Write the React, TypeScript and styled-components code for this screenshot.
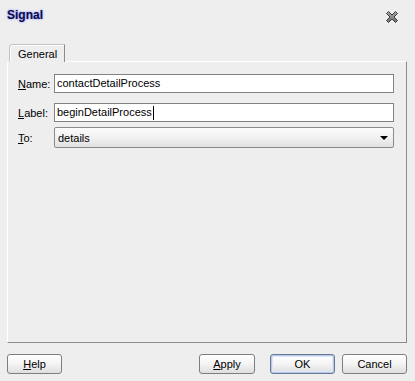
import React from "react";
import styled, { createGlobalStyle } from "styled-components";

const Global = createGlobalStyle`
  html, body { margin: 0; padding: 0; background: #eeeeee; }
  body { font-family: "Liberation Sans", Arial, sans-serif; font-size: 11px; color: #000; }
`;

const Dialog = styled.div`
  width: 415px;
  height: 381px;
  background: #eeeeee;
  display: flex;
  flex-direction: column;
  box-sizing: border-box;
`;

const TitleBar = styled.div`
  height: 44px;
  box-sizing: border-box;
  padding: 8px 16px 0 7px;
  display: flex;
  justify-content: space-between;
  align-items: flex-start;
`;

const Title = styled.div`
  font-weight: bold;
  font-size: 12px;
  color: #0c0c48;
  text-shadow: 0 0 1px #9a9af0, 0 0 2px #a8a8ff, 0 0 3px #c0c0ff;
  line-height: 15px;
`;

const CloseBtn = styled.div`
  width: 14px;
  height: 14px;
  margin-top: 2px;
  display: flex;
`;

const TabStrip = styled.div`
  display: flex;
  padding-left: 9px;
  height: 17px;
  position: relative;
  z-index: 1;
`;

const Tab = styled.div`
  width: 56px;
  height: 18px;
  box-sizing: border-box;
  border-left: 1px solid #c4c4c4;
  border-top: 1px solid #c4c4c4;
  border-right: 1px solid #8c8c8c;
  border-top-left-radius: 4px;
  background: #eeeeee;
  padding: 3px 0 0 8px;
  line-height: 12px;
  box-shadow: inset 1px 1px 0 0 #ffffff;
`;

const Panel = styled.div`
  margin: 0 8px 0 7px;
  height: 282px;
  box-sizing: border-box;
  border-top: 1px solid #ffffff;
  border-left: 1px solid #ffffff;
  border-right: 1px solid #8c8c8c;
  border-bottom: 1px solid #8c8c8c;
  padding: 12px 12px 0 10px;
  display: flex;
  flex-direction: column;
`;

const Row = styled.div<{ $gap: number }>`
  display: grid;
  grid-template-columns: 36px 340px;
  align-items: center;
  margin-bottom: ${(p) => p.$gap}px;
`;

const Label = styled.span`
  white-space: nowrap;
`;

const U = styled.span`
  text-decoration: underline;
`;

const TextField = styled.div`
  height: 19px;
  box-sizing: border-box;
  border: 1px solid #828282;
  background: #ffffff;
  padding: 0 2px;
  line-height: 17px;
  display: flex;
  align-items: center;
`;

const Caret = styled.span`
  display: inline-block;
  width: 1px;
  height: 14px;
  background: #000;
  margin-left: 1px;
`;

const Select = styled.div`
  height: 21px;
  box-sizing: border-box;
  border: 1px solid #8a8a8a;
  border-radius: 2px;
  background: linear-gradient(#fbfbfb 0%, #f2f2f2 45%, #e2e2e2 100%);
  padding: 0 4px 0 3px;
  display: flex;
  align-items: center;
  justify-content: space-between;
`;

const Arrow = styled.span`
  width: 0;
  height: 0;
  border-left: 4px solid transparent;
  border-right: 4px solid transparent;
  border-top: 4px solid #000;
  margin-right: 1px;
`;

const Footer = styled.div`
  display: flex;
  align-items: center;
  padding: 11px 8px 0 7px;
`;

const Spacer = styled.div`
  flex: 1;
`;

const Button = styled.div<{ $w: number; $ml?: number; $def?: boolean }>`
  width: ${(p) => p.$w}px;
  height: 20px;
  margin-left: ${(p) => p.$ml ?? 0}px;
  box-sizing: border-box;
  border: 1px solid ${(p) => (p.$def ? "#6f7888" : "#7e7e7e")};
  border-radius: 3px;
  background: linear-gradient(#ffffff 0%, #f4f4f4 50%, #dedede 100%);
  box-shadow: ${(p) => (p.$def ? "inset 0 0 0 1px #b4c8ef, inset 0 0 0 2px #dfe8fa" : "none")};
  display: flex;
  align-items: center;
  justify-content: center;
  line-height: 12px;
`;

const CloseIcon = () => (
  <svg width="14" height="14" viewBox="0 0 14 14">
    <defs>
      <linearGradient id="xg" x1="0" y1="0" x2="0" y2="1">
        <stop offset="0" stopColor="#a8a8a8" />
        <stop offset="1" stopColor="#6e6e6e" />
      </linearGradient>
    </defs>
    <polygon
      points="1.5,3.5 3.5,1.5 7,5 10.5,1.5 12.5,3.5 9,7 12.5,10.5 10.5,12.5 7,9 3.5,12.5 1.5,10.5 5,7"
      fill="url(#xg)"
      stroke="#3a3a3a"
      strokeWidth="1"
      strokeLinejoin="round"
    />
  </svg>
);

export default function App() {
  return (
    <>
      <Global />
      <Dialog>
        <TitleBar>
          <Title>Signal</Title>
          <CloseBtn>
            <CloseIcon />
          </CloseBtn>
        </TitleBar>
        <TabStrip>
          <Tab>General</Tab>
        </TabStrip>
        <Panel>
          <Row $gap={10}>
            <Label>
              <U>N</U>ame:
            </Label>
            <TextField>contactDetailProcess</TextField>
          </Row>
          <Row $gap={5}>
            <Label>
              <U>L</U>abel:
            </Label>
            <TextField>
              beginDetailProcess
              <Caret />
            </TextField>
          </Row>
          <Row $gap={0}>
            <Label>
              <U>T</U>o:
            </Label>
            <Select>
              <span>details</span>
              <Arrow />
            </Select>
          </Row>
        </Panel>
        <Footer>
          <Button $w={55}>
            <span>
              <U>H</U>elp
            </span>
          </Button>
          <Spacer />
          <Button $w={56}>
            <span>
              <U>A</U>pply
            </span>
          </Button>
          <Button $w={65} $ml={15} $def>
            OK
          </Button>
          <Button $w={65} $ml={7}>
            Cancel
          </Button>
        </Footer>
      </Dialog>
    </>
  );
}
